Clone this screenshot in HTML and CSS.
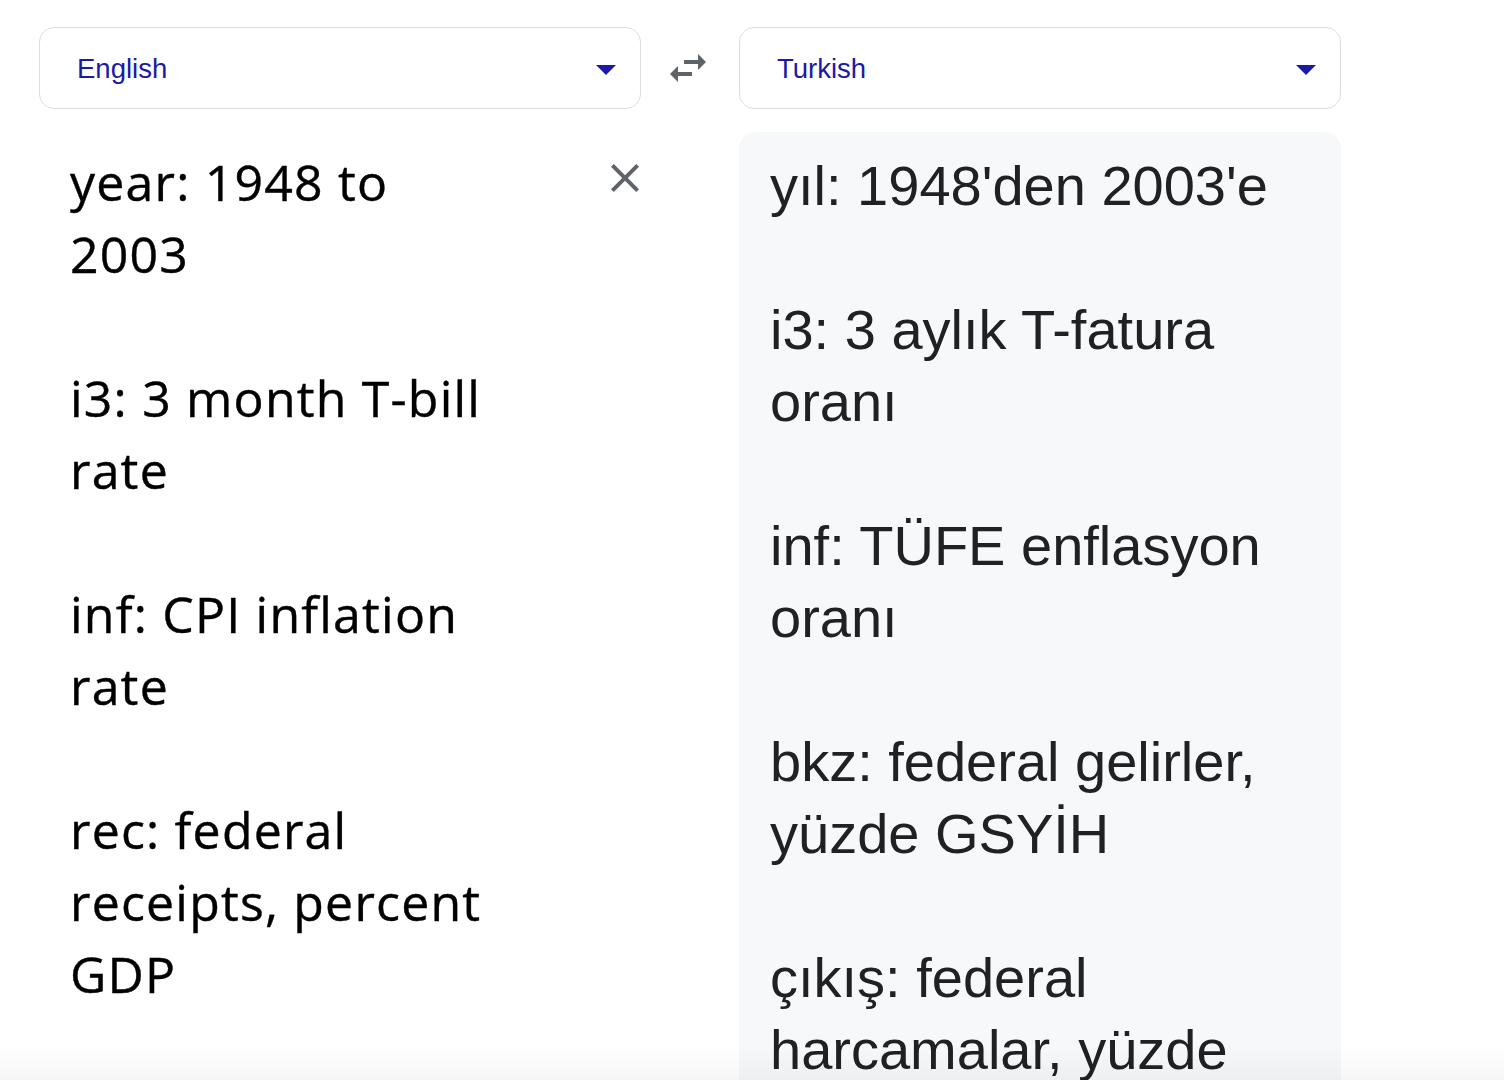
FILE: index.html
```html
<!DOCTYPE html>
<html lang="en">
<head>
<meta charset="utf-8">
<title>Translate</title>
<link rel="stylesheet" href="styles.css">
</head>
<body>
<div class="page">
  <div class="lang-row">
    <div class="lang-select">
      <span class="lang-name">English</span>
      <svg class="caret" viewBox="0 0 24 24" width="48" height="48"><path d="M7 10l5 5 5-5z"/></svg>
    </div>
    <div class="swap">
      <svg viewBox="0 0 24 24" width="48" height="48"><path d="M6.99 11L3 15l3.99 4v-3H14v-2H6.99v-3zM21 9l-3.99-4v3H10v2h7.01v3L21 9z"/></svg>
    </div>
    <div class="lang-select">
      <span class="lang-name">Turkish</span>
      <svg class="caret" viewBox="0 0 24 24" width="48" height="48"><path d="M7 10l5 5 5-5z"/></svg>
    </div>
  </div>
  <div class="text-row">
    <div class="source">
      <div class="source-text">
        <p>year: 1948 to 2003</p>
        <p>i3: 3 month T-bill rate</p>
        <p>inf: CPI inflation rate</p>
        <p>rec: federal receipts, percent GDP</p>
      </div>
      <button class="clear" aria-label="Clear">
        <svg viewBox="0 0 24 24" width="48" height="48"><path d="M19 6.41L17.59 5 12 10.59 6.41 5 5 6.41 10.59 12 5 17.59 6.41 19 12 13.41 17.59 19 19 17.59 13.41 12z"/></svg>
      </button>
    </div>
    <div class="spacer"></div>
    <div class="target">
      <p>yıl: 1948'den 2003'e</p>
      <p>i3: 3 aylık T-fatura oranı</p>
      <p>inf: TÜFE enflasyon oranı</p>
      <p>bkz: federal gelirler, yüzde GSYİH</p>
      <p>çıkış: federal harcamalar, yüzde GSYİH</p>
    </div>
  </div>
</div>
<div class="bottom-shade"></div>
</body>
</html>
```

FILE: styles.css
```css
html, body {
  margin: 0;
  padding: 0;
  background: #ffffff;
  height: 100%;
  overflow: hidden;
}

.page {
  padding: 27px 0 0 39px;
}

.lang-row {
  display: grid;
  grid-template-columns: 602px 98px 602px;
  height: 82px;
}

.lang-select {
  box-sizing: border-box;
  border: 1px solid #dadce0;
  border-radius: 15px;
  display: flex;
  align-items: center;
  justify-content: space-between;
  padding: 2px 10px 0 37px;
}

.lang-name {
  font-family: "Liberation Sans", Arial, sans-serif;
  font-size: 27.5px;
  color: #1a1aa6;
  line-height: 1;
}

.caret {
  fill: #1a1aa6;
  display: block;
}

.swap {
  display: flex;
  align-items: center;
  justify-content: center;
  padding-right: 4px;
}

.swap svg {
  fill: #5f6368;
  display: block;
}

.text-row {
  display: grid;
  grid-template-columns: 602px 98px 602px;
  margin-top: 23px;
}

.source {
  display: flex;
  justify-content: space-between;
  align-items: flex-start;
  padding: 14px 0 0 31px;
}

.source-text {
  width: 428px;
  font-family: "Open Sans", sans-serif;
  font-size: 50px;
  letter-spacing: 1.2px;
  line-height: 72px;
  color: #000000;
  -webkit-text-stroke: 0.4px #000000;
}

.source-text p,
.target p {
  margin: 0 0 72px 0;
}

.clear {
  border: none;
  background: none;
  padding: 0;
  margin: 8px -8px 0 0;
  width: 48px;
  height: 48px;
}

.clear svg {
  fill: #5f6368;
  display: block;
}

.target {
  background: #f7f8fa;
  border-radius: 16px 16px 0 0;
  padding: 18px 31px 0 31px;
  height: 1200px;
  font-family: "Liberation Sans", Arial, sans-serif;
  font-size: 56px;
  line-height: 72px;
  color: #202124;
}

.bottom-shade {
  position: fixed;
  left: 0;
  right: 0;
  bottom: 0;
  height: 34px;
  background: linear-gradient(to bottom, rgba(0, 0, 0, 0), rgba(0, 0, 0, 0.035));
  pointer-events: none;
}
```
